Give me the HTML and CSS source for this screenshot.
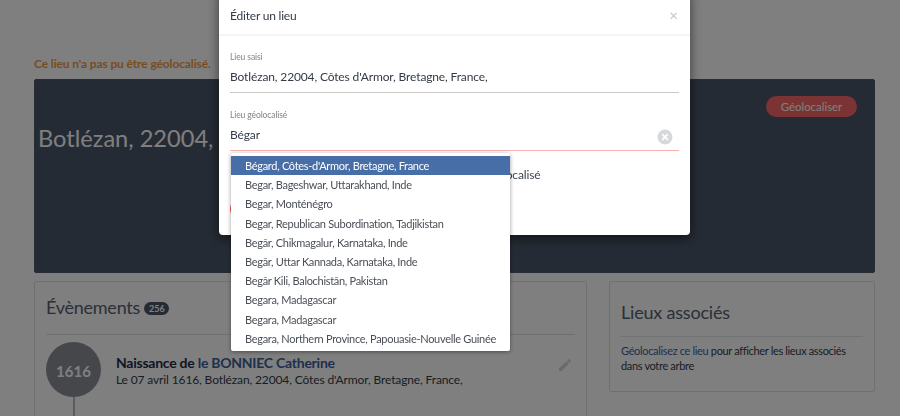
FILE: index.html
```html
<!DOCTYPE html>
<html lang="fr">
<head>
<meta charset="utf-8">
<title>Éditer un lieu</title>
<link rel="stylesheet" href="styles.css">
</head>
<body>
<div class="page">
  <p class="warning">Ce lieu n'a pas pu être géolocalisé.</p>
  <section class="hero">
    <h1 class="hero-title">Botlézan, 22004, Côtes d'Armor, Bretagne, France,</h1>
    <a class="hero-btn">Géolocaliser</a>
  </section>
  <div class="columns">
    <section class="card events">
      <h2 class="events-title">Évènements <span class="badge">256</span></h2>
      <div class="event">
        <div class="timeline"><div class="year">1616</div><div class="stem"></div></div>
        <div class="event-body">
          <div class="event-name">Naissance de <a class="link">le BONNIEC Catherine</a></div>
          <div class="event-sub">Le 07 avril 1616, Botlézan, 22004, Côtes d'Armor, Bretagne, France,</div>
        </div>
        <svg class="pencil" viewBox="0 0 24 24"><path d="M3 17.25V21h3.75L17.81 9.94l-3.75-3.75L3 17.25zM20.71 7.04c.39-.39.39-1.02 0-1.41l-2.34-2.34c-.39-.39-1.02-.39-1.41 0l-1.83 1.83 3.75 3.75 1.83-1.83z"/></svg>
      </div>
    </section>
    <aside class="card side">
      <h2 class="side-title">Lieux associés</h2>
      <p class="side-text"><a class="link-plain">Géolocalisez ce lieu</a> pour afficher les lieux associés dans votre arbre</p>
    </aside>
  </div>
</div>

<div class="backdrop"></div>
<div class="modal">
  <header class="modal-head">
    <span class="modal-title">Éditer un lieu</span>
    <span class="modal-close">×</span>
  </header>
  <div class="modal-body">
    <div class="field field-first">
      <label class="field-label">Lieu saisi</label>
      <div class="field-value">Botlézan, 22004, Côtes d'Armor, Bretagne, France,</div>
    </div>
    <div class="field field-geo">
      <label class="field-label">Lieu géolocalisé</label>
      <div class="field-value">Bégar</div>
      <svg class="clear" viewBox="0 0 16 16"><circle cx="8" cy="8" r="7.5" fill="#d6d8da"/><path d="M5.2 5.2l5.6 5.6M10.8 5.2l-5.6 5.6" stroke="#fff" stroke-width="1.8"/></svg>
    </div>
    <div class="check-row">Je ne souhaite pas que ce lieu soit géolocalisé</div>
    <button class="save">Enregistrer</button>
    <ul class="dropdown">
      <li class="active">Bégard, Côtes-d'Armor, Bretagne, France</li>
      <li>Begar, Bageshwar, Uttarakhand, Inde</li>
      <li>Begar, Monténégro</li>
      <li>Begar, Republican Subordination, Tadjikistan</li>
      <li>Begār, Chikmagalur, Karnataka, Inde</li>
      <li>Begār, Uttar Kannada, Karnataka, Inde</li>
      <li>Begār Kili, Balochistān, Pakistan</li>
      <li>Begara, Madagascar</li>
      <li>Begara, Madagascar</li>
      <li>Begara, Northern Province, Papouasie-Nouvelle Guinée</li>
    </ul>
  </div>
</div>
</body>
</html>
```
FILE: styles.css
```css
* { box-sizing: border-box; }
html, body { margin: 0; height: 416px; overflow: hidden; background: #fff; }
body { font-family: Lato, "Open Sans", sans-serif; color: #333b47; }

.page { height: 416px; overflow: hidden; padding: 56px 25px 0 34px; }
.warning { margin: 0 0 7px; font-size: 12px; letter-spacing: -.12px; line-height: 16px; font-weight: 700; color: #f09a3e; }

.hero { height: 194px; padding: 16px 17px 0 3px; background: #4a5668; border: 1px solid #4f5a6b; border-radius: 2px; display: flex; justify-content: space-between; align-items: flex-start; overflow: hidden; }
.hero-title { margin: 26px 0 0; font-size: 23.6px; line-height: 32px; font-weight: 400; color: #fff; white-space: nowrap; }
.hero-btn { flex: none; width: 91px; height: 21px; border-radius: 11px; background: #f76767; color: #fff; font-size: 11.4px; line-height: 21px; text-align: center; position: relative; }

.columns { display: flex; align-items: flex-start; gap: 22px; margin-top: 8px; }
.card { background: #fff; border: 1px solid #dfe1e4; border-radius: 2px; }
.events { width: 553px; height: 200px; padding: 0 11px; }
.side { width: 266px; height: 111px; padding: 0 11px; }

.events-title { margin: 0; height: 53px; padding-top: 12px; font-size: 18px; letter-spacing: -.25px; line-height: 26px; font-weight: 400; color: #566070; border-bottom: 1px solid #dfe1e4; }
.badge { display: inline-block; vertical-align: 2px; width: 25px; height: 13px; border-radius: 7px; background: #4a5668; color: #fff; font-size: 9px; letter-spacing: 0; line-height: 13px; font-weight: 700; text-align: center; }

.event { display: flex; align-items: flex-start; gap: 15px; margin-top: 7px; }
.timeline { display: flex; flex-direction: column; align-items: center; flex: none; }
.year { width: 55px; height: 55px; border-radius: 50%; background: #8b8f96; color: #fff; font-size: 15px; line-height: 58px; font-weight: 700; text-align: center; }
.stem { width: 2px; height: 40px; background: #b6b9bd; }
.event-body { flex: 1; padding-top: 12px; }
.event-name { font-size: 14px; letter-spacing: -.25px; line-height: 18px; font-weight: 700; color: #1f2d44; }
.link { color: #3c6099; }
.event-sub { font-size: 12px; letter-spacing: -.13px; line-height: 16px; color: #333b47; }
.pencil { flex: none; width: 16px; height: 16px; margin: 15px 2px 0 0; fill: #d4d4d4; }

.side-title { margin: 0; height: 55px; padding-top: 17px; font-size: 18px; letter-spacing: -.2px; line-height: 26px; font-weight: 400; color: #566070; border-bottom: 1px solid #e3e5e7; }
.side-text { margin: 6px 0 0; font-size: 11px; letter-spacing: -.34px; line-height: 15px; }
.link-plain { color: #3c6099; }

.backdrop { position: fixed; inset: 0; background: rgba(0, 0, 0, .5); }

.modal { position: fixed; left: 219px; top: -10px; width: 471px; height: 245px; background: #fff; border-radius: 0 0 4px 4px; box-shadow: 0 3px 12px rgba(0, 0, 0, .55); color: #3c4450; }
.modal-head { height: 46px; padding: 6px 11px 0; display: flex; justify-content: space-between; align-items: center; border-bottom: 2px solid #f5f5f5; }
.modal-title { font-size: 12px; letter-spacing: -.2px; font-weight: 400; color: #333b47; }
.modal-close { font-size: 15px; color: #c4c4c4; line-height: 1; margin-right: 1px; }

.modal-body { position: relative; padding: 0 11px; }
.field { position: relative; border-bottom: 1px solid #c9c9c9; }
.field-first { padding-top: 16px; height: 57px; }
.field-geo { margin-top: 17px; height: 41px; border-bottom: 1px solid #fdb0b0; }
.field-label { display: block; font-size: 8.5px; letter-spacing: -.1px; line-height: 11px; color: #7f8388; }
.field-value { margin-top: 6px; font-size: 12px; letter-spacing: -.14px; line-height: 16px; color: #333b47; }
.clear { position: absolute; right: 6px; top: 19px; width: 16px; height: 16px; }

.check-row { margin-top: 16px; padding-left: 78px; font-size: 12px; letter-spacing: -.14px; line-height: 16px; }
.save { display: block; margin-top: 15px; width: 100px; height: 22px; padding: 0; border: 0; border-radius: 11px; background: #f05a5a; color: #fff; font: 12px Lato, sans-serif; }

.dropdown { position: absolute; left: 12px; top: 117px; width: 279px; margin: 0; padding: 3px 0 3px; list-style: none; background: #fff; border-radius: 2px; box-shadow: 0 1px 4px rgba(0, 0, 0, .4); font-size: 11px; letter-spacing: -.3px; }
.dropdown li { height: 19.2px; padding-left: 14px; line-height: 19px; color: #4a4f57; white-space: nowrap; }
.dropdown li.active { background: #476ea6; color: #fff; }
```
